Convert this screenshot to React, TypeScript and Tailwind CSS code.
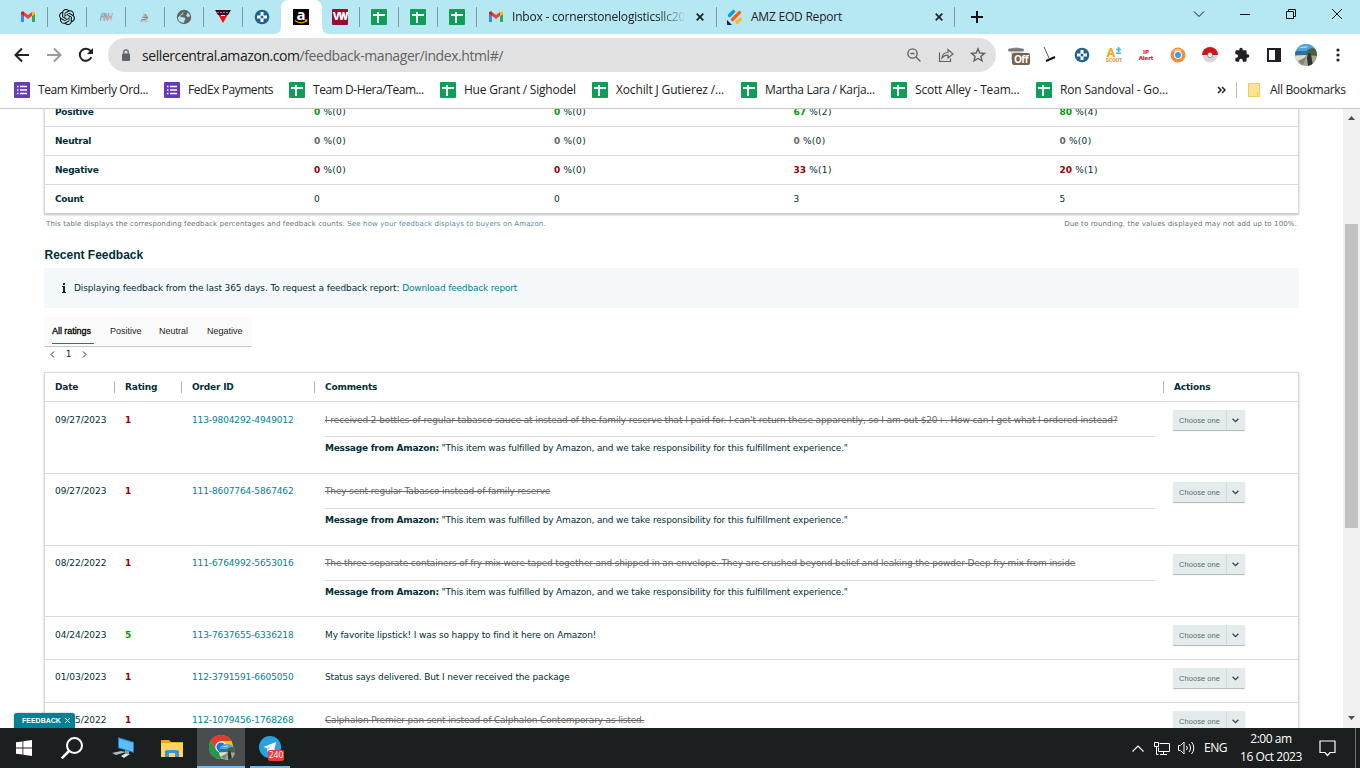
import type { ReactNode } from "react";

const SHEET = "sheet";
const FORM = "form";

const bookmarks = [
  { icon: FORM, label: "Team Kimberly Ord...", width: "w-[150px]", track: "tracking-[-0.4px]" },
  { icon: FORM, label: "FedEx Payments", width: "w-[125px]", track: "tracking-[-0.45px]" },
  { icon: SHEET, label: "Team D-Hera/Team...", width: "w-[151px]", track: "tracking-[-0.43px]" },
  { icon: SHEET, label: "Hue Grant / Sighodel", width: "w-[152px]", track: "tracking-[-0.23px]" },
  { icon: SHEET, label: "Xochilt J Gutierez /...", width: "w-[149px]", track: "tracking-[-0.15px]" },
  { icon: SHEET, label: "Martha Lara / Karja...", width: "w-[150px]", track: "tracking-[-0.33px]" },
  { icon: SHEET, label: "Scott Alley - Team...", width: "w-[145px]", track: "tracking-[-0.18px]" },
  { icon: SHEET, label: "Ron Sandoval - Go...", width: "w-[181px]", track: "tracking-[-0.18px]" },
];

const summary = [
  { label: "Positive", color: "text-[#009900]", cells: [["0", "0"], ["0", "0"], ["67", "2"], ["80", "4"]] },
  { label: "Neutral", color: "text-[#666666]", cells: [["0", "0"], ["0", "0"], ["0", "0"], ["0", "0"]] },
  { label: "Negative", color: "text-[#990000]", cells: [["0", "0"], ["0", "0"], ["33", "1"], ["20", "1"]] },
];

const AMAZON_NOTE = "\"This item was fulfilled by Amazon, and we take responsibility for this fulfillment experience.\"";

const feedback = [
  { date: "09/27/2023", rating: 1, order: "113-9804292-4949012", comment: "I received 2 bottles of regular tabasco sauce at instead of the family reserve that I paid for. I can't return these apparently, so I am out $20+. How can I get what I ordered instead?", struck: true, note: true, height: "h-[72px]", pad: "pt-[12px]", track: "tracking-[-0.106px]" },
  { date: "09/27/2023", rating: 1, order: "111-8607764-5867462", comment: "They sent regular Tabasco instead of family reserve", struck: true, note: true, height: "h-[72px]", pad: "pt-[11px]", track: "tracking-[-0.155px]" },
  { date: "08/22/2022", rating: 1, order: "111-6764992-5653016", comment: "The three separate containers of fry mix were taped together and shipped in an envelope. They are crushed beyond belief and leaking the powder Deep fry mix from inside", struck: true, note: true, height: "h-[71px]", pad: "pt-[11px]", track: "tracking-[-0.162px]" },
  { date: "04/24/2023", rating: 5, order: "113-7637655-6336218", comment: "My favorite lipstick! I was so happy to find it here on Amazon!", struck: false, note: false, height: "h-[43px]", pad: "pt-[12px]", track: "tracking-[-0.13px]" },
  { date: "01/03/2023", rating: 1, order: "112-3791591-6605050", comment: "Status says delivered. But I never received the package", struck: false, note: false, height: "h-[43px]", pad: "pt-[11px]", track: "tracking-[-0.13px]" },
  { date: "12/15/2022", rating: 1, order: "112-1079456-1768268", comment: "Calphalon Premier pan sent instead of Calphalon Contemporary as listed.", struck: true, note: false, height: "h-[43px]", pad: "pt-[11px]", track: "tracking-[-0.165px]" },
];

function GmailIcon() {
  return (
    <svg width="16" height="16" viewBox="0 0 16 16">
      <path d="M1 4.5V13h3V7z" fill="#4285f4" />
      <path d="M12 7v6h3V4.5z" fill="#34a853" />
      <path d="M1 4.2C1 2.6 2.8 2.2 4 3l4 3 4-3v3.800L8 10 4 6.800z" fill="#ea4335" />
      <path d="M1 4.2C1 3 2.6 2 4 3v4L1 4.900z" fill="#c5221f" />
      <path d="M12 3c1.400-1 3 0 3 1.200v.7L12 7z" fill="#fbbc04" />
    </svg>
  );
}

function SheetIcon() {
  return (
    <svg width="16" height="16" viewBox="0 0 16 16">
      <rect width="16" height="16" rx="1" fill="#0f9d58" />
      <path d="M2 6h12M7 3v11" stroke="#fff" strokeWidth="2" fill="none" />
    </svg>
  );
}

function FormIcon() {
  return (
    <svg width="16" height="16" viewBox="0 0 16 16">
      <rect width="16" height="16" rx="1" fill="#673ab7" />
      <path d="M3 4.500h1.500M3 8h1.500M3 11.500h1.500M6 4.500h7M6 8h7M6 11.500h7" stroke="#fff" strokeWidth="1.500" />
    </svg>
  );
}

function OpenAiIcon() {
  return (
    <svg width="16" height="16" viewBox="0 0 24 24" fill="#111">
      <path d="M22.2819 9.8211a5.9847 5.9847 0 0 0-.5157-4.9108 6.0462 6.0462 0 0 0-6.5098-2.9A6.0651 6.0651 0 0 0 4.9807 4.1818a5.9847 5.9847 0 0 0-3.9977 2.9 6.0462 6.0462 0 0 0 .7427 7.0966 5.98 5.98 0 0 0 .511 4.9107 6.051 6.051 0 0 0 6.5146 2.9001A5.9847 5.9847 0 0 0 13.2599 24a6.0557 6.0557 0 0 0 5.7718-4.2058 5.9894 5.9894 0 0 0 3.9977-2.9001 6.0557 6.0557 0 0 0-.7475-7.0729zm-9.022 12.6081a4.4755 4.4755 0 0 1-2.8764-1.0408l.1419-.0804 4.7783-2.7582a.7948.7948 0 0 0 .3927-.6813v-6.7369l2.02 1.1686a.071.071 0 0 1 .038.052v5.5826a4.504 4.504 0 0 1-4.4945 4.4944zm-9.6607-4.1254a4.4708 4.4708 0 0 1-.5346-3.0137l.142.0852 4.783 2.7582a.7712.7712 0 0 0 .7806 0l5.8428-3.3685v2.3324a.0804.0804 0 0 1-.0332.0615L9.74 19.9502a4.4992 4.4992 0 0 1-6.1408-1.6464zM2.3408 7.8956a4.485 4.485 0 0 1 2.3655-1.9728V11.6a.7664.7664 0 0 0 .3879.6765l5.8144 3.3543-2.0201 1.1685a.0757.0757 0 0 1-.071 0l-4.8303-2.7865A4.504 4.504 0 0 1 2.3408 7.8956zm16.5963 3.8558L13.1038 8.364 15.1192 7.2a.0757.0757 0 0 1 .071 0l4.8303 2.7913a4.4944 4.4944 0 0 1-.6765 8.1042v-5.6772a.79.79 0 0 0-.407-.667zm2.0107-3.0231l-.142-.0852-4.7735-2.7818a.7759.7759 0 0 0-.7854 0L9.409 9.2297V6.8974a.0662.0662 0 0 1 .0284-.0615l4.8303-2.7866a4.4992 4.4992 0 0 1 6.6802 4.66zM8.3065 12.863l-2.02-1.1638a.0804.0804 0 0 1-.038-.0567V6.0742a4.4992 4.4992 0 0 1 7.3757-3.4537l-.142.0805L8.704 5.459a.7948.7948 0 0 0-.3927.6813zm1.0976-2.3654l2.602-1.4998 2.6069 1.4998v2.9994l-2.5974 1.4997-2.6067-1.4997Z" />
    </svg>
  );
}

function GlobeIcon() {
  return (
    <svg width="16" height="16" viewBox="0 0 16 16">
      <circle cx="8" cy="8" r="7.200" fill="#5f6368" />
      <path d="M8.500 2.200l-2 1.300 1 1.500-2 1-1.500 1.200 2 1 2.500.3 1 1.500-1 1.500-.5 2.200C4.500 14 2 11.500 2 8.500M10.500 3.200l1 1.800-1.500 1.500 1.500 1.500 2.500-.5c0-2-1.300-3.600-3.500-4.300z" fill="#b5e8f2" />
    </svg>
  );
}

function RoundCrossIcon() {
  return (
    <svg width="16" height="16" viewBox="0 0 16 16">
      <circle cx="8" cy="8" r="7.300" fill="#1f6391" />
      <path d="M6.500 3h3v3.500H13v3H9.500V13h-3V9.500H3v-3h3.500z" fill="#fff" />
      <circle cx="8" cy="8" r="1.500" fill="#1f6391" />
    </svg>
  );
}

function AmazonIcon() {
  return (
    <div className="relative flex h-4 w-4 justify-center bg-black font-['Open_Sans',sans-serif] text-[15px] font-bold leading-[10px] text-white">
      a
      <svg className="absolute left-0 top-0" width="16" height="16" viewBox="0 0 16 16">
        <path d="M2 11.500c3.500 2.800 8 2.800 11.500.5M12 11.200h2l-.6 1.800" fill="none" stroke="#f90" strokeWidth="1.200" />
      </svg>
    </div>
  );
}

function IconTab({ children, divider = true }: { children: ReactNode; divider?: boolean }) {
  return (
    <div className="flex h-[34px] w-[39px] items-center justify-center">
      <div className="flex flex-1 justify-center">{children}</div>
      <div className={divider ? "h-5 w-px bg-[#7f979d]" : "h-5 w-px"} />
    </div>
  );
}

function CloseX() {
  return (
    <svg width="8" height="8" viewBox="0 0 8 8">
      <path d="M.7.7l6.600 6.600M7.300.7L.7 7.300" stroke="#222" strokeWidth="1.700" />
    </svg>
  );
}

function TabStrip() {
  return (
    <div className="flex h-[34px] items-center bg-[#b5e8f2] pl-[9px]">
      <IconTab><GmailIcon /></IconTab>
      <IconTab><OpenAiIcon /></IconTab>
      <IconTab>
        <svg width="14" height="10" viewBox="0 0 14 10" fill="none" strokeWidth="1.200">
          <path d="M1 9L3 2c3-2 4 1 0 3M5 9l2-8 1 7 2-7" stroke="#8fa6bd" />
          <path d="M4 5l2 4M8 3l1 5 2-4 1 3 1.500-6" stroke="#db9ca2" />
        </svg>
      </IconTab>
      <IconTab>
        <svg width="12" height="12" viewBox="0 0 12 12">
          <path d="M0 10l5-2 6 3H1z" fill="#cdbcc6" />
          <path d="M4 2l3 2 1 3-3-1z" fill="#d8b35b" />
          <path d="M6 3l3 4-6-1M2 9l6-1" stroke="#7e7aa5" fill="none" />
        </svg>
      </IconTab>
      <IconTab><GlobeIcon /></IconTab>
      <IconTab>
        <svg width="16" height="16" viewBox="0 0 16 16">
          <path d="M0 1h16l-3 5H3z" fill="#2a1029" />
          <path d="M2 3.500h12" stroke="#d85a7a" strokeDasharray="2 1" />
          <path d="M3.500 6h9L8 14z" fill="#f00a14" />
          <path d="M6 6.500h4" stroke="#fff" />
        </svg>
      </IconTab>
      <IconTab divider={false}><RoundCrossIcon /></IconTab>
      <div className="relative h-[34px] w-[39px]">
        <svg className="absolute -left-2 top-0" width="56" height="34" viewBox="0 0 56 34">
          <path d="M0 34c5 0 7-3 7-8V8c0-5 3-8 8-8h25c5 0 8 3 8 8v18c0 5 3 8 8 8z" fill="#fff" />
        </svg>
        <div className="absolute left-[11px] top-[9px]"><AmazonIcon /></div>
      </div>
      <IconTab>
        <div className="flex h-4 w-4 items-center justify-center rounded-[1px] bg-[#9b0a2f] font-['Roboto',sans-serif] text-[11px] font-black tracking-[-1.2px] text-white">VW</div>
      </IconTab>
      <IconTab><SheetIcon /></IconTab>
      <IconTab><SheetIcon /></IconTab>
      <IconTab><SheetIcon /></IconTab>
      <div className="flex h-[34px] w-[240px] items-center pl-[11px]">
        <GmailIcon />
        <div className="ml-2 w-[172px] overflow-hidden whitespace-nowrap text-[12px] tracking-[-0.2px] [mask-image:linear-gradient(to_right,black_145px,transparent_176px)]">
          Inbox - cornerstonelogisticsllc20
        </div>
        <div className="ml-3"><CloseX /></div>
        <div className="ml-auto h-5 w-px bg-[#7f979d]" />
      </div>
      <div className="flex h-[34px] w-[238px] items-center pl-[10px]">
        <svg width="16" height="16" viewBox="0 0 16 16" strokeLinecap="round" strokeWidth="3.200">
          <path d="M2.500 6.500l4-4" stroke="#0099ff" />
          <path d="M5.500 10.500l7-7" stroke="#ff6100" />
          <path d="M10 13.500l3.500-3.500" stroke="#ffb629" />
          <path d="M0 11l5 5H1c-.6 0-1-.4-1-1z" fill="#0a1551" />
        </svg>
        <div className="ml-2 w-[184px] whitespace-nowrap text-[12px] tracking-[-0.22px]">AMZ EOD Report</div>
        <CloseX />
        <div className="ml-auto h-5 w-px bg-[#7f979d]" />
      </div>
      <svg className="ml-[16px]" width="12" height="12" viewBox="0 0 12 12">
        <path d="M6 0v12M0 6h12" stroke="#111" strokeWidth="2" />
      </svg>
      <div className="mb-1.5 ml-auto flex">
        <svg width="46" height="12" viewBox="0 0 46 12" fill="none" stroke="#111"><path d="M18 3.500l5 5 5-5" /></svg>
        <svg width="46" height="12" viewBox="0 0 46 12" fill="none" stroke="#111"><path d="M18 6.500h10" /></svg>
        <svg width="46" height="12" viewBox="0 0 46 12" fill="none" stroke="#111"><path d="M18.500 3.500h7v7h-7zM20.500 3.500v-2h7v7h-2" /></svg>
        <svg width="46" height="12" viewBox="0 0 46 12" fill="none" stroke="#111"><path d="M18 1l10 10M28 1L18 11" /></svg>
      </div>
    </div>
  );
}

function ExtIcon({ children }: { children: ReactNode }) {
  return <div className="flex w-8 justify-center">{children}</div>;
}

function BeachPhoto({ className }: { className: string }) {
  return (
    <svg className={className} viewBox="0 0 22 22">
      <defs>
        <clipPath id="beach"><circle cx="11" cy="11" r="11" /></clipPath>
      </defs>
      <g clipPath="url(#beach)">
        <rect width="22" height="22" fill="#a9a48f" />
        <path d="M0 0h22v7H0z" fill="#4fa3e0" />
        <path d="M5 3l8-1-2 2H5z" fill="#a8d2ee" />
        <path d="M0 7h14v4H0z" fill="#2c7295" />
        <path d="M12 6l5-2 5 1v7l-8-1z" fill="#4a6140" />
        <path d="M0 12l11-1-3 6-8 2z" fill="#e0ddd0" />
        <path d="M13 9l3 1 2 12h-5l-1-8z" fill="#2c352f" />
        <path d="M3 17l8-4-3 8z" fill="#7b8478" />
      </g>
    </svg>
  );
}

function Toolbar() {
  return (
    <div className="flex h-[42px] items-center">
      <div className="flex w-[108px] items-center">
        <svg className="ml-3.5" width="16" height="16" viewBox="0 0 16 16" fill="none" stroke="#202124" strokeWidth="2"><path d="M15 8H2M8 1.500L1.500 8 8 14.500" /></svg>
        <svg className="ml-4" width="16" height="16" viewBox="0 0 16 16" fill="none" stroke="#9a9a9a" strokeWidth="2"><path d="M1 8h13M8 1.500L14.500 8 8 14.500" /></svg>
        <svg className="ml-4" width="16" height="16" viewBox="0 0 16 16">
          <path d="M13.300 10.200A6 6 0 1 1 12.600 4.200" fill="none" stroke="#202124" strokeWidth="2" />
          <path d="M15 1v6H9z" fill="#202124" />
        </svg>
      </div>
      <div className="flex h-[34px] w-[888px] items-center rounded-full bg-[#e1e1e1] pl-[13px] pr-[10px]">
        <svg width="10" height="12" viewBox="0 0 10 12">
          <rect x="1" y="4.500" width="8" height="7.500" rx="1" fill="#5f6368" />
          <path d="M2.800 5V3a2.200 2.200 0 0 1 4.400 0v2" fill="none" stroke="#5f6368" strokeWidth="1.300" />
        </svg>
        <div className="ml-[11px] whitespace-nowrap text-[14px] tracking-[-0.43px] text-[#5f6368]">
          <span className="text-[#202124]">sellercentral.amazon.com</span>/feedback-manager/index.html#/
        </div>
        <div className="ml-auto flex items-center gap-4 text-[#5f6368]">
          <svg width="16" height="16" viewBox="0 0 16 16" fill="none" stroke="#5f6368" strokeWidth="1.400"><circle cx="6.500" cy="6.500" r="4.600" /><path d="M10 10l4.500 4.500M4.500 6.500h4" /></svg>
          <svg width="16" height="16" viewBox="0 0 16 16" fill="none" stroke="#5f6368" strokeWidth="1.200"><path d="M1.500 5.500v9h11v-3M4 11c.5-4 3-5.500 6-5.500V2.500L15 7l-5 4V8.200C7.500 8 5.500 9 4 11z" /></svg>
          <svg width="16" height="16" viewBox="0 0 16 16" fill="none" stroke="#5f6368" strokeWidth="1.400"><path d="M8 1.800l1.800 4.200 4.600.4-3.500 3 1.100 4.500L8 11.500l-4 2.400 1.100-4.500-3.500-3 4.600-.4z" /></svg>
        </div>
      </div>
      <div className="flex items-center pl-1.5">
        <ExtIcon>
          <div className="relative h-5 w-5">
            <svg width="18" height="18" viewBox="0 0 18 18"><ellipse cx="8" cy="4" rx="5" ry="1.500" fill="#999" /><rect y="3.500" width="16" height="3" rx="1.500" fill="#777" /><path d="M3 7h11l-1 8H3z" fill="#d5d5d5" /></svg>
            <div className="absolute left-[4px] top-[8px] flex h-[12px] w-[18px] items-center justify-center rounded-[2px] bg-[#7a6248] text-[10px] font-bold leading-none tracking-[-0.5px] text-white">Off</div>
          </div>
        </ExtIcon>
        <ExtIcon>
          <svg width="16" height="16" viewBox="0 0 16 16" fill="none"><path d="M2 0l5 11" stroke="#555" /><path d="M4 14l9-4" stroke="#111" strokeWidth="2" /></svg>
        </ExtIcon>
        <ExtIcon><RoundCrossIcon /></ExtIcon>
        <ExtIcon>
          <div className="flex h-4 w-4 flex-col items-center font-['Roboto',sans-serif] font-black leading-none">
            <div className="flex h-[11px] text-[13px] leading-[11px] text-[#f5ab1d]">A<span className="text-[11px] leading-[8px] text-[#3db9e8]">±</span></div>
            <div className="text-[5px] text-[#f3912f]">SCOUT</div>
          </div>
        </ExtIcon>
        <ExtIcon>
          <div className="whitespace-nowrap text-center font-['DejaVu_Sans',sans-serif] text-[5.500px] font-black leading-[6px] tracking-[-0.1px] text-[#e0101c]">IP<br />Alert</div>
        </ExtIcon>
        <ExtIcon>
          <svg width="16" height="16" viewBox="0 0 16 16"><circle cx="8" cy="8" r="7.500" fill="#f58b3c" /><path d="M3 4a7 7 0 0 1 9-1l-2 2-5 0z" fill="#fbc08b" /><circle cx="8" cy="8" r="4" fill="#fff" /><circle cx="8" cy="8" r="3" fill="#3d9be0" /></svg>
        </ExtIcon>
        <ExtIcon>
          <svg width="16" height="16" viewBox="0 0 16 16"><circle cx="8" cy="8" r="7.500" fill="#d6d6d6" /><path d="M0 8a8 8 0 0 1 16 0z" fill="#d5121b" /><circle cx="8" cy="8" r="2.500" fill="#fff" stroke="#555" strokeWidth=".6" /></svg>
        </ExtIcon>
        <ExtIcon>
          <svg width="16" height="16" viewBox="0 0 24 24" fill="#202124"><path d="M20.500 11H19V7c0-1.100-.9-2-2-2h-4V3.500a2.500 2.500 0 0 0-5 0V5H4c-1.100 0-2 .9-2 2v3.800h1.500a2.700 2.700 0 0 1 0 5.400H2V20c0 1.100.9 2 2 2h3.800v-1.500a2.700 2.700 0 0 1 5.400 0V22H17c1.100 0 2-.9 2-2v-4h1.500a2.500 2.500 0 0 0 0-5z" /></svg>
        </ExtIcon>
        <ExtIcon>
          <svg width="14" height="14" viewBox="0 0 14 14"><path d="M1 1h12v12H1z" fill="none" stroke="#202124" strokeWidth="2" /><path d="M8 1h5v12H8z" fill="#202124" /></svg>
        </ExtIcon>
        <ExtIcon><BeachPhoto className="h-[22px] w-[22px]" /></ExtIcon>
        <ExtIcon>
          <svg width="4" height="14" viewBox="0 0 4 14" fill="#202124"><circle cx="2" cy="2" r="1.600" /><circle cx="2" cy="7" r="1.600" /><circle cx="2" cy="12" r="1.600" /></svg>
        </ExtIcon>
      </div>
    </div>
  );
}

function BookmarksBar() {
  return (
    <div className="flex h-[33px] items-center border-b border-[#c9c9c9] pb-[5px] pl-[14px] text-[12px] text-[#202124]">
      {bookmarks.map((b) => (
        <div key={b.label} className={`flex shrink-0 items-center gap-2 whitespace-nowrap ${b.width} ${b.track}`}>
          {b.icon === FORM ? <FormIcon /> : <SheetIcon />}
          {b.label}
        </div>
      ))}
      <svg width="9" height="8" viewBox="0 0 9 8" fill="none" stroke="#202124" strokeWidth="1.500"><path d="M1 1l3 3-3 3M5 1l3 3-3 3" /></svg>
      <div className="ml-[10px] h-4 w-px bg-[#bbb]" />
      <svg className="ml-[11px]" width="12" height="14" viewBox="0 0 12 14"><path d="M.5.500h11v13H.5z" fill="#ffe393" stroke="#ecc95a" /><path d="M9.500 9.500h2v4h-2z" fill="#ffe9a8" stroke="#ecc95a" strokeWidth=".8" /></svg>
      <div className="ml-[10px] whitespace-nowrap tracking-[-0.33px]">All Bookmarks</div>
    </div>
  );
}

function SummaryTable() {
  const widths = ["w-[240px]", "w-[239.500px]", "w-[266px]", "w-[200px]"];
  return (
    <div className="-mt-[11px] border-x border-[#d5dbdb] shadow-[0_1px_2px_rgba(0,0,0,0.25)]">
      {summary.map((row) => (
        <div key={row.label} className="flex h-[29px] items-center border-b border-[#d5dbdb] pl-[10px]">
          <div className="w-[259px] font-bold tracking-[-0.25px]">{row.label}</div>
          {row.cells.map(([pct, count], i) => (
            <div key={i} className={widths[i]}>
              <span className={`font-bold ${row.color}`}>{pct}</span><span className="tracking-[0.3px]"> %({count})</span>
            </div>
          ))}
        </div>
      ))}
      <div className="flex h-[29px] items-center border-b border-[#c6cccc] pl-[10px]">
        <div className="w-[259px] font-bold tracking-[-0.25px]">Count</div>
        {["0", "0", "3", "5"].map((n, i) => (
          <div key={i} className={widths[i]}>{n}</div>
        ))}
      </div>
    </div>
  );
}

function ChooseOne() {
  return (
    <div className="flex h-[20px] w-[72px] rounded-[1px] bg-[#e3ebec] shadow-[0_1px_1px_rgba(0,0,0,0.3)]">
      <div className="flex w-[54px] items-center justify-center border-r border-[#d3dcdd] pt-px font-['Liberation_Sans',Arial,sans-serif] text-[7.500px] tracking-[0.05px] text-[#5a6c70]">Choose one</div>
      <div className="flex flex-1 items-center justify-center pr-px">
        <svg width="7" height="5" viewBox="0 0 7 5" fill="none" stroke="#33484d" strokeWidth="1.300"><path d="M.6.800l2.900 2.900L6.400.8" /></svg>
      </div>
    </div>
  );
}

function FeedbackTable() {
  return (
    <div className="mt-[12px] border border-[#d5dbdb] shadow-[0_1px_2px_rgba(0,0,0,0.25)]">
      <div className="flex h-[29px] items-center border-b border-[#d5dbdb] pl-[10px] font-bold tracking-[-0.18px]">
        <div className="w-[59px]">Date</div>
        <div className="w-[67px] border-l border-[#aab7b8] pl-[10px]">Rating</div>
        <div className="w-[133px] border-l border-[#aab7b8] pl-[10px]">Order ID</div>
        <div className="w-[849px] border-l border-[#aab7b8] pl-[10px]">Comments</div>
        <div className="border-l border-[#aab7b8] pl-[10px]">Actions</div>
      </div>
      {feedback.map((row) => (
        <div key={row.order} className={`flex border-b border-[#d5dbdb] pl-[10px] ${row.height}`}>
          <div className={`w-[70px] tracking-[-0.05px] ${row.pad}`}>{row.date}</div>
          <div className={`w-[67px] font-bold ${row.pad} ${row.rating === 5 ? "text-[#009900]" : "text-[#990000]"}`}>{row.rating}</div>
          <div className={`w-[133px] tracking-[-0.12px] text-[#008296] ${row.pad}`}>{row.order}</div>
          <div className="flex h-[63px] w-[848px] flex-col">
            <div className={`h-[34px] whitespace-nowrap ${row.pad} ${row.track} ${row.struck ? "text-[#666666] line-through" : ""}`}>{row.comment}</div>
            {row.note && (
              <div className="w-[830px] border-t border-[#d5dbdb] pt-[5px] tracking-[-0.16px]">
                <b className="tracking-[-0.23px]">Message from Amazon:</b> {AMAZON_NOTE}
              </div>
            )}
          </div>
          <div className="pt-[8px]"><ChooseOne /></div>
        </div>
      ))}
    </div>
  );
}

function Scrollbar() {
  return (
    <div className="flex w-[17px] flex-col items-center bg-[#f0f0f0]">
      <svg className="mt-[6px]" width="7" height="5" viewBox="0 0 7 5"><path d="M0 5l3.500-4L7 5z" fill="#505050" /></svg>
      <div className="mt-[104px] h-[304px] w-[13px] bg-[#c1c1c1]" />
      <svg className="mb-[7px] mt-auto" width="7" height="5" viewBox="0 0 7 5"><path d="M0 0l3.500 4L7 0z" fill="#505050" /></svg>
    </div>
  );
}

function Page() {
  return (
    <div className="relative flex h-[619px] overflow-hidden bg-white font-['DejaVu_Sans',Verdana,sans-serif] text-[9px] leading-[12px] text-[#002f36]">
      <div className="w-[1343px] pl-[44px] pr-[44px]">
        <SummaryTable />
        <div className="flex h-[20px] items-center justify-between px-[2px] text-[7px] tracking-[0.13px] text-[#5f7378]">
          <div className="whitespace-nowrap">This table displays the corresponding feedback percentages and feedback counts. <span className="text-[#5b8ba0]">See how your feedback displays to buyers on Amazon.</span></div>
          <div className="whitespace-nowrap">Due to rounding, the values displayed may not add up to 100%.</div>
        </div>
        <div className="mt-[11px] flex h-[20px] items-center pl-[0.500px] font-['Liberation_Sans',Arial,sans-serif] text-[12px] font-bold">Recent Feedback</div>
        <div className="mt-[3px] flex h-[40px] items-center bg-[#f4f8fa] pl-[18px]">
          <svg width="4" height="10" viewBox="0 0 4 10" fill="#002f36"><path d="M1 0h2v2H1zM0 3h3v6h1v1H0V9h1V4H0z" /></svg>
          <div className="ml-[8px] tracking-[-0.12px]">Displaying feedback from the last 365 days. To request a feedback report: <span className="tracking-[-0.18px] text-[#008296]">Download feedback report</span></div>
        </div>
        <div className="mt-[9px] flex h-[30px] w-[208px] border-b border-[#c8c8c8] bg-[#fafafa] pl-[8px] font-['Liberation_Sans',Arial,sans-serif] text-[9px] text-[#222]">
          <div className="mr-[16px] h-[27px] w-[42px] border-b border-[#008296] pt-[8px] tracking-[-0.05px] text-black [-webkit-text-stroke:0.3px_black]">All ratings</div>
          <div className="w-[49px] pt-[8px]">Positive</div>
          <div className="w-[48px] pt-[8px]">Neutral</div>
          <div className="pt-[8px]">Negative</div>
        </div>
        <div className="flex h-[14px] items-center gap-[9.500px] pl-[6px]">
          <svg width="5" height="7" viewBox="0 0 5 7" fill="none" stroke="#002f36"><path d="M4 .5l-3 3 3 3" /></svg>
          <div className="w-[8px] text-center">1</div>
          <svg width="5" height="7" viewBox="0 0 5 7" fill="none" stroke="#002f36"><path d="M1 .5l3 3-3 3" /></svg>
        </div>
        <div className="-mt-px">
          <FeedbackTable />
        </div>
      </div>
      <Scrollbar />
      <div className="absolute bottom-0 left-[14px] flex h-[15px] w-[61px] items-center rounded-t-[3px] bg-[#008296] pl-[8px] font-['Liberation_Sans',Arial,sans-serif] text-[7px] font-bold text-white shadow-[0_0_2px_rgba(0,0,0,0.4)]">
        FEEDBACK
        <svg className="ml-[4px]" width="5" height="5" viewBox="0 0 5 5" stroke="#fff"><path d="M0 0l5 5M5 0L0 5" /></svg>
      </div>
    </div>
  );
}

function Taskbar() {
  return (
    <div className="flex h-[40px] items-center bg-[#1b1f20] text-white">
      <div className="flex w-[48px] justify-center">
        <svg width="16" height="16" viewBox="0 0 16 16" fill="#fff"><path d="M0 2.300L6.500 1.400v6.100H0zM7.300 1.300L16 0v7.500H7.300zM0 8.400h6.500v6.200L0 13.700zM7.300 8.400H16V16l-8.700-1.200z" /></svg>
      </div>
      <div className="flex w-[48px] justify-center">
        <svg width="22" height="22" viewBox="0 0 22 22" fill="none" stroke="#fff" strokeWidth="2"><circle cx="13.500" cy="8.500" r="7.500" /><path d="M8 14l-7.300 7.300" strokeWidth="2.600" /></svg>
      </div>
      <div className="flex w-[53px] justify-center">
        <svg width="24" height="22" viewBox="0 0 24 22">
          <path d="M7 0l16 5v11L7 11z" fill="#1d7ad0" /><path d="M8 1.500l14 4.300v9L8 10.500z" fill="#5dbdfb" />
          <path d="M1 16l9-2 5 1-10 3z" fill="#aebcc4" /><path d="M10 19l5-3 4 1-6 4z" fill="#dbe3e6" /><path d="M14 13l4 1v3h-4z" fill="#8b9aa2" />
        </svg>
      </div>
      <div className="flex w-[46px] justify-center">
        <svg width="22" height="19" viewBox="0 0 22 19">
          <path d="M0 1h8l2 2h12v15H0z" fill="#e9a817" /><path d="M0 4h22v14H0z" fill="#ffd65e" />
          <path d="M4 18v-6l2-1h10l2 1v6h-4v-4H8v4z" fill="#3a92dc" />
        </svg>
      </div>
      <div className="ml-[2px] flex h-[40px] w-[48px] items-center justify-center border-b-2 border-[#76b9ed] bg-[#4a4d4f]">
        <div className="relative">
          <svg width="24" height="24" viewBox="0 0 24 24">
            <circle cx="12" cy="12" r="12" fill="#fbc116" />
            <path d="M1.600 6A12 12 0 0 1 22.400 6H12l-5 9z" fill="#e33b2e" />
            <path d="M1.600 6A12 12 0 0 0 12 24l5.200-9L7 15z" fill="#229a4d" />
            <circle cx="12" cy="12" r="5.700" fill="#fff" /><circle cx="12" cy="12" r="4.600" fill="#1a73e8" />
          </svg>
          <BeachPhoto className="absolute left-[10px] top-[9px] h-4 w-4" />
        </div>
      </div>
      <div className="ml-[5px] flex h-[40px] w-[40px] items-center justify-center border-b-2 border-[#76b9ed]">
        <div className="relative">
          <svg width="22" height="22" viewBox="0 0 22 22"><circle cx="11" cy="11" r="11" fill="#2ba2dc" /><path d="M4.500 11L17 6l-2.200 11-4-3-2 2-.5-3.700z" fill="#fff" /><path d="M8.300 12.300L14 8.500l-4.500 5-.7 2.500z" fill="#b9d9ea" /></svg>
          <div className="absolute left-[9px] top-[14px] flex h-[11px] w-[16px] items-center justify-center rounded-[2px] bg-[#ee3b39] text-[8.500px] leading-none">240</div>
        </div>
      </div>
      <div className="ml-auto flex items-center">
        <svg width="12" height="7" viewBox="0 0 12 7" fill="none" stroke="#fff" strokeWidth="1.200"><path d="M.5 6.500L6 1l5.500 5.500" /></svg>
        <svg className="ml-[10px]" width="17" height="15" viewBox="0 0 17 15" fill="none" stroke="#fff"><path d="M5.500 2.500h10v8h-11v-4M9.500 10.500v3M6 13.500h7M.5 1.500h4v4h-4zM2.500 5.500v8h2" /></svg>
        <svg className="ml-[7px]" width="17" height="14" viewBox="0 0 17 14" fill="none" stroke="#fff"><path d="M.5 4.500h2l3.500-3.500v12l-3.500-3.500h-2zM8.500 5a3 3 0 0 1 0 4M11 3a6 6 0 0 1 0 8M13.500 1a9 9 0 0 1 0 12" /></svg>
        <div className="ml-[9px] w-[24px] whitespace-nowrap text-[12px] tracking-[-0.5px]">ENG</div>
        <div className="ml-[10px] w-[66px] whitespace-nowrap text-center text-[12px] leading-[18px] tracking-[-0.45px]">
          2:00 am<br />16 Oct 2023
        </div>
        <svg className="ml-[15px]" width="17" height="17" viewBox="0 0 17 17" fill="none" stroke="#fff" strokeWidth="1.200"><path d="M1 1h15v11.500h-5l-2.500 3-2.500-3H1z" /></svg>
        <div className="ml-[19px] mr-[4px] h-[40px] w-px bg-[#6b6e6f]" />
      </div>
    </div>
  );
}

export default function App() {
  return (
    <div className="h-[768px] w-[1360px] overflow-hidden bg-white font-['Open_Sans','Noto_Sans',sans-serif] text-[#202124]">
      <TabStrip />
      <Toolbar />
      <BookmarksBar />
      <Page />
      <Taskbar />
    </div>
  );
}
